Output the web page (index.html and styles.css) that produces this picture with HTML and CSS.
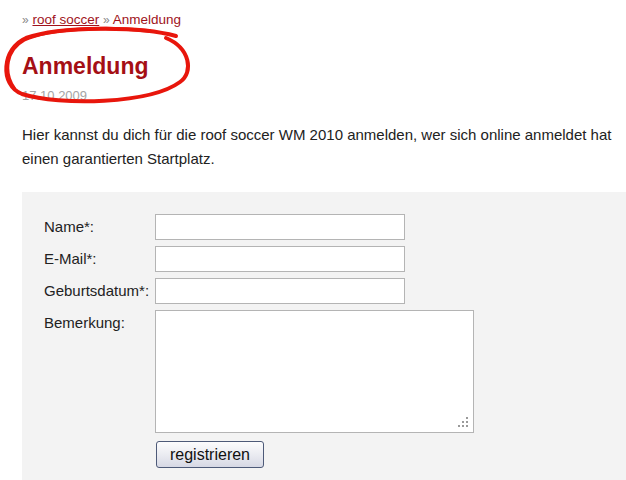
FILE: index.html
```html
<!DOCTYPE html>
<html lang="de">
<head>
  <meta charset="UTF-8">
  <title>Anmeldung - roof soccer</title>
  <link rel="stylesheet" href="styles.css">
</head>
<body>
  <div class="page">
    <!-- Brotkrumen -->
    <div class="crumbs">
      <span class="sep">&raquo;</span> <a href="#">roof soccer</a>
      <span class="sep">&raquo;</span> <span class="cur">Anmeldung</span>
    </div>

    <div class="head">
      <h1>Anmeldung</h1>
      <div class="date">17.10.2009</div>
      <!-- roter Kreis um den Titel -->
      <svg class="circle" width="200" height="84" viewBox="0 0 200 84">
        <path d="M176,10 C140,0 60,0 26,12 C2,22 -1,59 22,68 C60,80 150,78 180,56 C194,46 190,22 166,12"
              fill="none" stroke="#e8160c" stroke-width="4" stroke-linecap="round"/>
        <path d="M150,5 C110,0 50,2 24,14 C6,24 3,46 14,62"
              fill="none" stroke="#e8160c" stroke-width="3.5" stroke-linecap="round"/>
      </svg>
    </div>

    <p class="intro">Hier kannst du dich für die roof soccer WM 2010 anmelden, wer sich online anmeldet hat einen garantierten Startplatz.</p>

    <form class="signup">
      <label for="name">Name*:</label>
      <input type="text" id="name">
      <label for="mail">E-Mail*:</label>
      <input type="text" id="mail">
      <label for="geb">Geburtsdatum*:</label>
      <input type="text" id="geb">
      <label for="bem">Bemerkung:</label>
      <div class="area"><textarea id="bem"></textarea></div>
      <span></span>
      <div><button type="button">registrieren</button></div>
    </form>
  </div>
</body>
</html>
```

FILE: styles.css
```css
* { box-sizing: border-box; }
body {
  margin: 0;
  font-family: 'Liberation Sans', Arial, sans-serif;
  font-size: 15px;
  color: #222;
  background: #fff;
  overflow: hidden;
}
.page {
  padding: 12px 0 0 22px;
}
.crumbs {
  font-size: 13.5px;
  color: #a0131b;
  line-height: 16px;
}
.crumbs a {
  color: #a0131b;
}
.crumbs .sep {
  color: #888;
  font-size: 12px;
}
.head {
  position: relative;
  margin-top: 24px;
}
h1 {
  margin: 0;
  font-size: 23px;
  line-height: 28px;
  color: #a50f15;
  font-weight: bold;
}
.date {
  font-size: 13px;
  color: #a5a5a5;
  margin-top: 8px;
  line-height: 16px;
}
.circle {
  position: absolute;
  left: -22px;
  top: -26px;
}
.intro {
  margin: 19px 0 0;
  line-height: 24px;
  padding-right: 10px;
}
.signup {
  margin-top: 21px;
  background: #f3f3f3;
  padding: 22px 0 40px 22px;
  display: grid;
  grid-template-columns: 111px 1fr;
  row-gap: 6px;
}
.signup label {
  padding-top: 5px;
  line-height: 16px;
}
.signup input {
  width: 250px;
  height: 26px;
  border: 1px solid #b4b4b4;
  background: #fff;
  margin: 0;
}
.area {
  position: relative;
  width: 319px;
  height: 123px;
}
.area textarea {
  display: block;
  width: 319px;
  height: 123px;
  border: 1px solid #b4b4b4;
  background: #fff;
  margin: 0;
  resize: none;
}
/* Griff unten rechts */
.area::after {
  content: "";
  position: absolute;
  right: 6px;
  bottom: 6px;
  width: 2px;
  height: 2px;
  background: #9a9a9a;
  box-shadow: -4px 0 #9a9a9a, -8px 0 #9a9a9a, 0 -4px #9a9a9a, -4px -4px #9a9a9a, 0 -8px #9a9a9a;
}
.signup button {
  margin: 2px 0 0 1px;
  width: 108px;
  height: 27px;
  font-family: 'Liberation Sans', Arial, sans-serif;
  font-size: 16px;
  color: #111;
  border: 1px solid #4d5a78;
  border-radius: 3px;
  background: linear-gradient(#fcfcfd, #e9eaf0 55%, #d6d8e4);
}
```
